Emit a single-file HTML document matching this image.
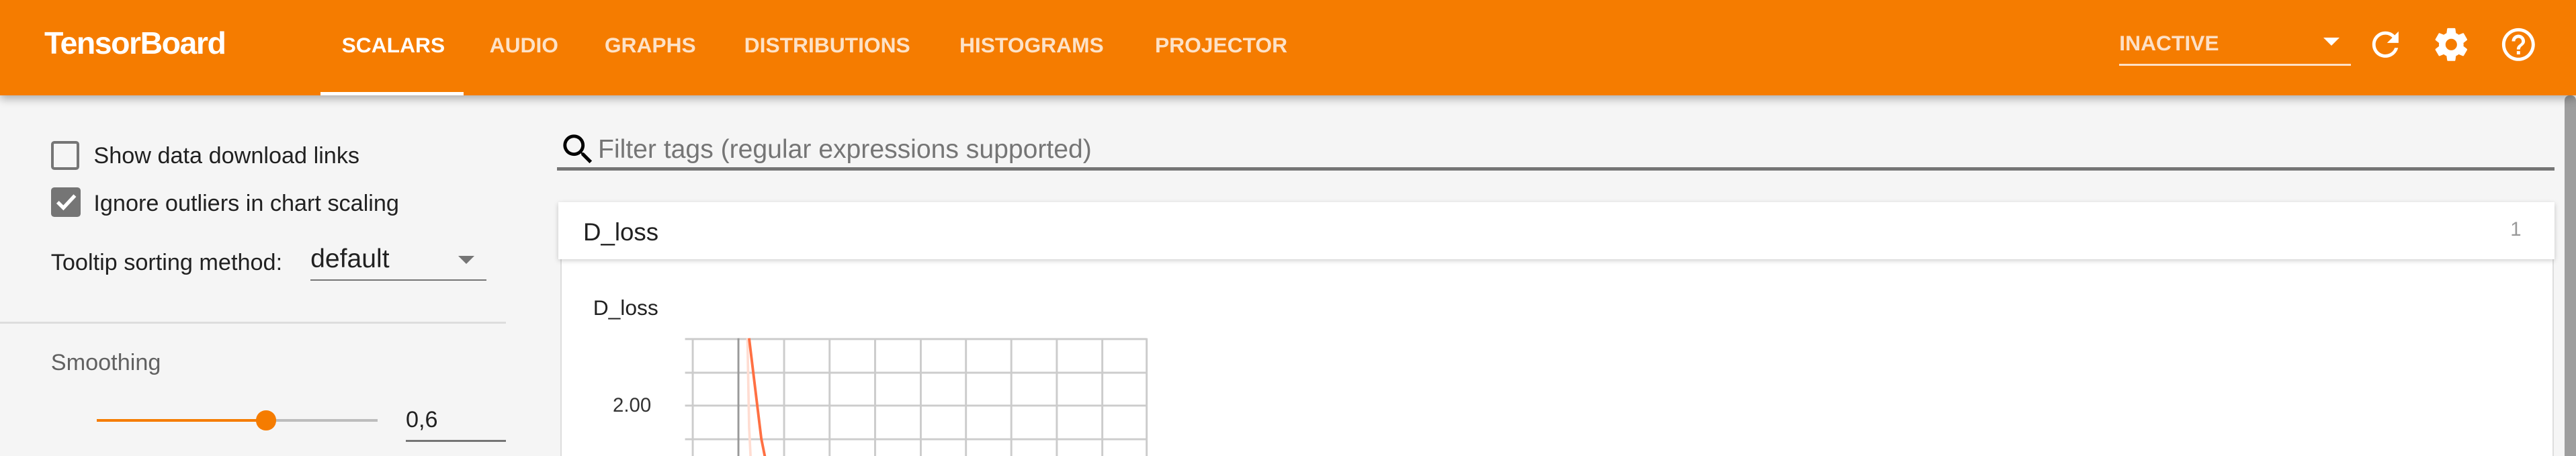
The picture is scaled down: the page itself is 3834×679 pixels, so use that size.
<!DOCTYPE html>
<html><head><meta charset="utf-8"><style>
html,body{margin:0;padding:0;overflow:hidden}
body{width:3834px;height:679px;background:#f5f5f5;font-family:"Liberation Sans",sans-serif}
#r{zoom:2.4452;width:1568px;height:278px;position:relative;overflow:hidden;background:#f5f5f5}
.a{position:absolute;white-space:nowrap}
#hdr{position:absolute;left:0;top:0;width:1568px;height:58px;background:#f57c00;box-shadow:0 2px 5px rgba(0,0,0,.3);z-index:2}
.tab{position:absolute;top:20px;font-size:13px;font-weight:bold;color:rgba(255,255,255,.78);letter-spacing:0}
</style></head><body><div id="r">
<div id="hdr">
 <div class="a" style="left:27px;top:15px;font-size:19px;font-weight:bold;color:#fff;letter-spacing:-.6px">TensorBoard</div>
 <div class="tab" style="left:208px;color:#fff">SCALARS</div>
 <div class="tab" style="left:298px">AUDIO</div>
 <div class="tab" style="left:368px">GRAPHS</div>
 <div class="tab" style="left:453px">DISTRIBUTIONS</div>
 <div class="tab" style="left:584px">HISTOGRAMS</div>
 <div class="tab" style="left:703px">PROJECTOR</div>
 <div class="a" style="left:195px;top:56px;width:87px;height:2px;background:#fff"></div>
 <div class="a" style="left:1290px;top:19px;font-size:13px;font-weight:bold;color:#fde0c6">INACTIVE</div>
 <div class="a" style="left:1414px;top:23px;width:0;height:0;border-left:5px solid transparent;border-right:5px solid transparent;border-top:5px solid #fff"></div>
 <div class="a" style="left:1290px;top:39px;width:141px;height:1px;background:#fde0c6"></div>
 <svg class="a" style="left:1440px;top:15px" width="24" height="24" viewBox="0 0 24 24"><path fill="#fff" d="M17.65 6.35A7.958 7.958 0 0 0 12 4c-4.420 0-7.990 3.580-7.990 8s3.570 8 7.990 8c3.730 0 6.840-2.550 7.730-6h-2.080A5.990 5.990 0 0 1 12 18c-3.310 0-6-2.690-6-6s2.690-6 6-6c1.660 0 3.140.690 4.220 1.780L13 11h7V4l-2.350 2.350z"/></svg>
 <svg class="a" style="left:1480px;top:15px" width="24" height="24" viewBox="0 0 24 24"><path fill="#fff" d="M19.43 12.98c.04-.32.07-.64.07-.98s-.03-.66-.07-.98l2.11-1.65c.19-.15.24-.42.12-.64l-2-3.46c-.12-.22-.39-.3-.61-.22l-2.49 1c-.52-.4-1.08-.73-1.69-.98l-.38-2.65A.488.488 0 0 0 14 2h-4c-.25 0-.46.18-.49.42l-.38 2.65c-.61.25-1.17.59-1.69.98l-2.49-1c-.23-.09-.49 0-.61.22l-2 3.46c-.13.22-.07.49.12.64l2.11 1.65c-.04.32-.07.65-.07.98s.03.66.07.98l-2.11 1.65c-.19.15-.24.42-.12.64l2 3.46c.12.22.39.3.61.22l2.490-1c.52.4 1.08.73 1.69.98l.38 2.65c.03.24.24.42.49.42h4c.25 0 .46-.18.49-.42l.38-2.65c.61-.25 1.17-.59 1.69-.98l2.49 1c.23.09.49 0 .61-.22l2-3.46c.12-.22.07-.49-.12-.64l-2.11-1.65zM12 15.5c-1.93 0-3.5-1.57-3.5-3.5s1.57-3.5 3.5-3.5 3.5 1.57 3.5 3.5-1.57 3.5-3.5 3.5z"/></svg>
 <svg class="a" style="left:1521px;top:15px" width="24" height="24" viewBox="0 0 24 24"><path fill="#fff" d="M11 18h2v-2h-2v2zm1-16C6.48 2 2 6.48 2 12s4.48 10 10 10 10-4.48 10-10S17.52 2 12 2zm0 18c-4.41 0-8-3.59-8-8s3.59-8 8-8 8 3.59 8 8-3.59 8-8 8zm0-14c-2.21 0-4 1.79-4 4h2c0-1.1.9-2 2-2s2 .9 2 2c0 2-3 1.75-3 5h2c0-2.25 3-2.5 3-5 0-2.21-1.79-4-4-4z"/></svg>
</div>
<div class="a" style="left:31px;top:86px;width:14px;height:14px;border:2px solid #757575;border-radius:2px"></div>
<div class="a" style="left:57px;top:87px;font-size:14px;color:#212121">Show data download links</div>
<div class="a" style="left:31px;top:114px;width:18px;height:18px;background:#757575;border-radius:2px"></div>
<svg class="a" style="left:31px;top:114px" width="18" height="18" viewBox="0 0 18 18"><path d="M4 9l3.5 3.5L14.5 5" stroke="#fff" stroke-width="2.2" fill="none"/></svg>
<div class="a" style="left:57px;top:116px;font-size:14px;color:#212121">Ignore outliers in chart scaling</div>
<div class="a" style="left:31px;top:152px;font-size:14px;color:#212121">Tooltip sorting method:</div>
<div class="a" style="left:189px;top:149px;font-size:16px;color:#212121">default</div>
<div class="a" style="left:279px;top:156px;border-left:5px solid transparent;border-right:5px solid transparent;border-top:5px solid #757575"></div>
<div class="a" style="left:189px;top:170px;width:107px;height:1px;background:#757575"></div>
<div class="a" style="left:0;top:196px;width:308px;height:1px;background:#ddd"></div>
<div class="a" style="left:31px;top:213px;font-size:14px;color:#616161">Smoothing</div>
<div class="a" style="left:59px;top:255px;width:171px;height:2px;background:#bdbdbd"></div>
<div class="a" style="left:59px;top:255px;width:103px;height:2px;background:#f57c00"></div>
<div class="a" style="left:156px;top:250px;width:12px;height:12px;border-radius:50%;background:#f57c00"></div>
<div class="a" style="left:247px;top:248px;font-size:14px;color:#212121">0,6</div>
<div class="a" style="left:247px;top:268px;width:61px;height:1px;background:#757575"></div>
<svg class="a" style="left:340px;top:79px" width="24" height="24" viewBox="0 0 24 24"><path fill="#000" d="M15.5 14h-.79l-.28-.27A6.471 6.471 0 0 0 16 9.5 6.5 6.5 0 1 0 9.5 16c1.61 0 3.09-.59 4.23-1.57l.27.28v.79l5 4.99L20.49 19l-4.99-5zm-6 0C7.01 14 5 11.99 5 9.5S7.01 5 9.5 5 14 7.01 14 9.5 11.990 14 9.5 14z"/></svg>
<div class="a" style="left:364px;top:82px;font-size:16px;color:#757575">Filter tags (regular expressions supported)</div>
<div class="a" style="left:339px;top:102px;width:1216px;height:2px;background:#757575"></div>
<div class="a" style="left:340px;top:123px;width:1215px;height:35px;background:#fff;box-shadow:0 1px 3px rgba(0,0,0,.2);z-index:1"></div>
<div class="a" style="left:355px;top:133px;font-size:15px;color:#212121;z-index:1">D_loss</div>
<div class="a" style="left:1528px;top:133px;font-size:12px;color:#999;z-index:1">1</div>
<div class="a" style="left:341px;top:158px;width:1212px;height:130px;background:#fff;border-left:1px solid #ddd;border-right:1px solid #ddd"></div>
<div class="a" style="left:361px;top:180px;font-size:13px;color:#212121">D_loss</div>
<div class="a" style="left:373px;top:240px;font-size:12px;color:#333">2.00</div>
<svg class="a" style="left:400px;top:200px" width="310" height="80" viewBox="400 200 310 80">
<g stroke="#ccc" stroke-width="1.2">
<line x1="417" y1="206.5" x2="698" y2="206.5"/><line x1="417" y1="227" x2="698" y2="227"/><line x1="417" y1="247" x2="698" y2="247"/><line x1="417" y1="267.5" x2="698" y2="267.5"/>
<line x1="421.7" y1="206" x2="421.7" y2="280"/><line x1="477.3" y1="206" x2="477.3" y2="280"/><line x1="505" y1="206" x2="505" y2="280"/><line x1="532.7" y1="206" x2="532.7" y2="280"/><line x1="560.5" y1="206" x2="560.5" y2="280"/><line x1="588" y1="206" x2="588" y2="280"/><line x1="615.6" y1="206" x2="615.6" y2="280"/><line x1="643.3" y1="206" x2="643.3" y2="280"/><line x1="671" y1="206" x2="671" y2="280"/><line x1="698" y1="206" x2="698" y2="280"/>
</g>
<line x1="449.5" y1="206" x2="449.5" y2="280" stroke="#999" stroke-width="1.2"/>
<path d="M455 206 L456 260 L457 280" stroke="#ffddd2" stroke-width="1.5" fill="none"/>
<path d="M456 206 L463.4 267 L466 280" stroke="#ff7043" stroke-width="1.6" fill="none"/>
</svg>
<div class="a" style="left:1561px;top:58px;width:7px;height:220px;background:#9e9e9e;border-radius:3px 3px 0 0"></div>
</div></body></html>
